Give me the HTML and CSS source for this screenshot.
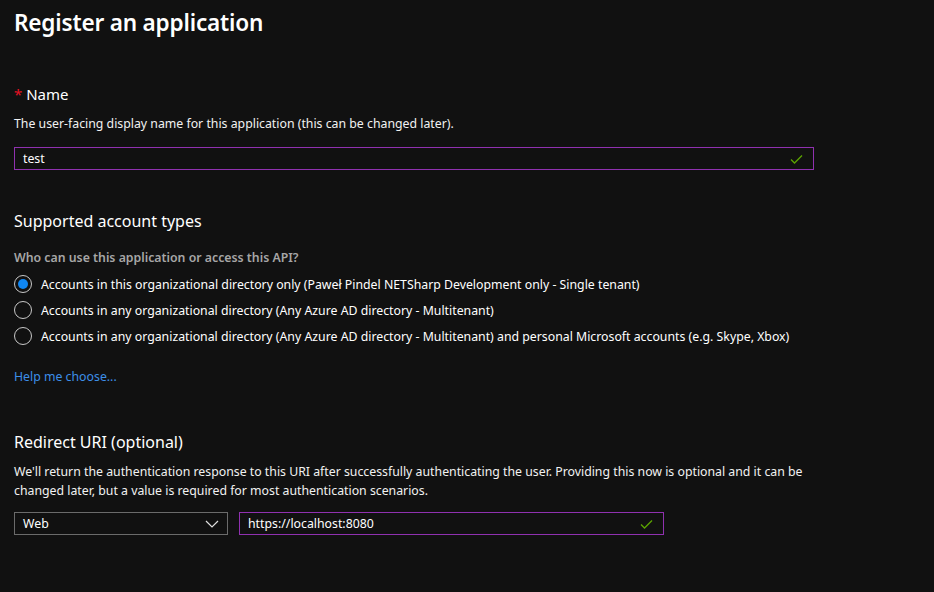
FILE: index.html
```html
<!DOCTYPE html>
<html>
<head>
<meta charset="utf-8">
<link rel="stylesheet" href="styles.css">
</head>
<body>
<div class="page">
  <h1 class="title">Register an application</h1>

  <section class="section name-section">
    <div class="label"><span class="req">*</span> Name</div>
    <p class="desc">The user-facing display name for this application (this can be changed later).</p>
    <div class="input name-input">
      <span class="value">test</span>
      <svg class="check" width="13" height="10" viewBox="0 0 13 10"><path d="M1 5.5 L4.5 9 L12 1.5" fill="none" stroke="#5ba300" stroke-width="1.3"/></svg>
    </div>
  </section>

  <section class="section accounts">
    <div class="heading">Supported account types</div>
    <div class="question">Who can use this application or access this API?</div>
    <div class="radios">
      <div class="radio-row"><span class="radio checked"></span><span>Accounts in this organizational directory only (Paweł Pindel NETSharp Development only - Single tenant)</span></div>
      <div class="radio-row"><span class="radio"></span><span>Accounts in any organizational directory (Any Azure AD directory - Multitenant)</span></div>
      <div class="radio-row"><span class="radio"></span><span>Accounts in any organizational directory (Any Azure AD directory - Multitenant) and personal Microsoft accounts (e.g. Skype, Xbox)</span></div>
    </div>
    <a class="help">Help me choose...</a>
  </section>

  <section class="section redirect">
    <div class="heading">Redirect URI (optional)</div>
    <p class="desc wrap">We'll return the authentication response to this URI after successfully authenticating the user. Providing this now is optional and it can be changed later, but a value is required for most authentication scenarios.</p>
    <div class="uri-row">
      <div class="select">
        <span class="value">Web</span>
        <svg class="chev" width="14" height="8" viewBox="0 0 14 8"><path d="M1 1 L7 7 L13 1" fill="none" stroke="#e0e0e0" stroke-width="1.2"/></svg>
      </div>
      <div class="input uri-input">
        <span class="value">https://localhost:8080</span>
        <svg class="check" width="13" height="10" viewBox="0 0 13 10"><path d="M1 5.5 L4.5 9 L12 1.5" fill="none" stroke="#5ba300" stroke-width="1.3"/></svg>
      </div>
    </div>
  </section>
</div>
</body>
</html>
```

FILE: styles.css
```css
* { box-sizing: border-box; }
html, body { margin: 0; padding: 0; background: #111111; }
body {
  font-family: "Noto Sans", "Open Sans", sans-serif;
  color: #ffffff;
  font-size: 12.3px;
  width: 934px;
  height: 592px;
  overflow: hidden;
}
.page { padding: 7px 14px 0 14px; }
.title {
  margin: 0;
  font-size: 22.6px;
  font-weight: 600;
  line-height: 32px;
  letter-spacing: -0.2px;
}
.section { display: flex; flex-direction: column; }
.name-section { margin-top: 45px; }
.label { font-size: 15px; line-height: 20px; }
.req { color: #e81123; }
.desc { margin: 10px 0 0 0; line-height: 19px; color: #f2f2f2; }
.input, .select {
  display: flex;
  align-items: center;
  height: 23px;
  border: 1px solid #9031b0;
  padding: 0 6px 0 8px;
  justify-content: space-between;
}
.name-input { margin-top: 14px; width: 800px; }
.check { margin-right: 4px; }
.accounts { margin-top: 40px; }
.heading { font-size: 16px; line-height: 22px; }
.question { margin-top: 17px; font-weight: 600; color: #a6a6a6; line-height: 18px; }
.radios { margin-top: 8px; display: flex; flex-direction: column; gap: 8px; }
.radio-row { display: flex; align-items: center; gap: 9px; height: 18px; }
.radio {
  width: 18px; height: 18px;
  border: 1px solid #c8c8c8;
  border-radius: 50%;
  display: inline-flex; align-items: center; justify-content: center;
  flex: none;
}
.radio.checked::after {
  content: "";
  width: 10px; height: 10px;
  border-radius: 50%;
  background: #0f86f2;
}
.help { margin-top: 23px; color: #3d8fe8; line-height: 18px; }
.redirect { margin-top: 45px; }
.wrap { width: 800px; margin-top: 9px; }
.uri-row { margin-top: 12px; display: flex; gap: 11px; }
.select { width: 214px; border-color: #6b6b6b; padding-right: 8px; }
.uri-input { width: 425px; }
```
